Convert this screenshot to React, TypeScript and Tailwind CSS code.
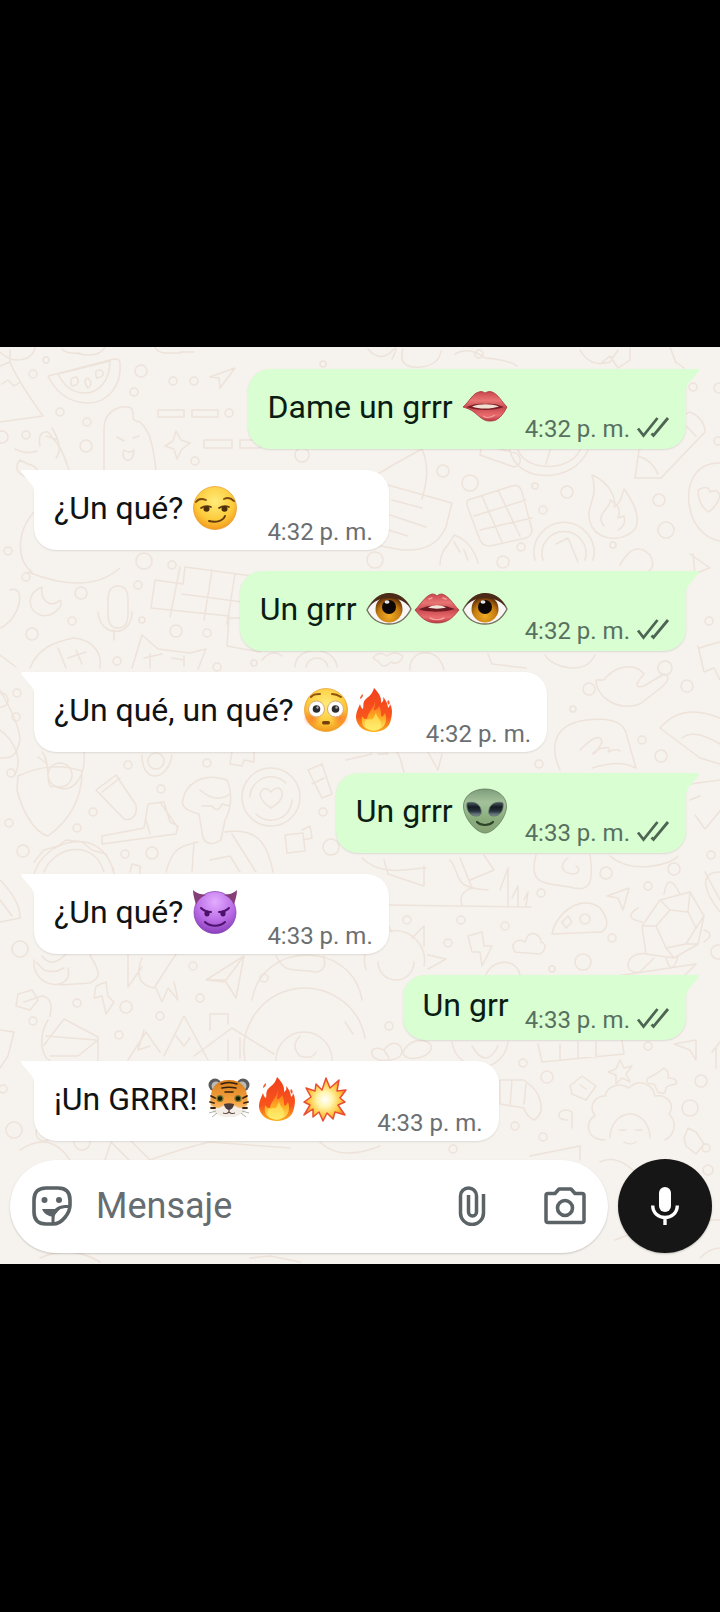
import type { ReactNode } from "react";

type EmojiName = "kiss" | "smirk" | "eye" | "lips" | "flushed" | "fire" | "alien" | "devil" | "tiger" | "boom";

type Message = {
  out: boolean;
  text: string;
  emojis: EmojiName[];
  time: string;
};

const messages: Message[] = [
  { out: true, text: "Dame un grrr", emojis: ["kiss"], time: "4:32 p. m." },
  { out: false, text: "¿Un qué?", emojis: ["smirk"], time: "4:32 p. m." },
  { out: true, text: "Un grrr", emojis: ["eye", "lips", "eye"], time: "4:32 p. m." },
  { out: false, text: "¿Un qué, un qué?", emojis: ["flushed", "fire"], time: "4:32 p. m." },
  { out: true, text: "Un grrr", emojis: ["alien"], time: "4:33 p. m." },
  { out: false, text: "¿Un qué?", emojis: ["devil"], time: "4:33 p. m." },
  { out: true, text: "Un grr", emojis: [], time: "4:33 p. m." },
  { out: false, text: "¡Un GRRR!", emojis: ["tiger", "fire", "boom"], time: "4:33 p. m." },
];

const emojiLabels: Record<EmojiName, string> = {
  kiss: "🫦",
  smirk: "😏",
  eye: "👁️",
  lips: "👄",
  flushed: "😳",
  fire: "🔥",
  alien: "👽",
  devil: "😈",
  tiger: "🐯",
  boom: "💥",
};

function Gradients() {
  return (
    <svg className="absolute h-0 w-0" aria-hidden="true">
      <defs>
        <radialGradient id="yellow" cx="50%" cy="35%" r="65%">
          <stop offset="0" stopColor="#ffec7a" />
          <stop offset="0.65" stopColor="#fdcb3c" />
          <stop offset="1" stopColor="#f39a1d" />
        </radialGradient>
        <radialGradient id="blush" cx="50%" cy="50%" r="50%">
          <stop offset="0" stopColor="#f9722b" stopOpacity="0.75" />
          <stop offset="1" stopColor="#f9722b" stopOpacity="0" />
        </radialGradient>
        <linearGradient id="lip" x1="0" y1="0" x2="0" y2="1">
          <stop offset="0" stopColor="#c9474d" />
          <stop offset="0.3" stopColor="#e87573" />
          <stop offset="0.55" stopColor="#c94850" />
          <stop offset="0.8" stopColor="#e86b6c" />
          <stop offset="1" stopColor="#b93843" />
        </linearGradient>
        <radialGradient id="iris" cx="50%" cy="75%" r="70%">
          <stop offset="0" stopColor="#f2ab24" />
          <stop offset="0.6" stopColor="#c47a10" />
          <stop offset="1" stopColor="#5a2b08" />
        </radialGradient>
        <linearGradient id="flame" x1="0" y1="0" x2="0" y2="1">
          <stop offset="0" stopColor="#f0401f" />
          <stop offset="0.65" stopColor="#f8551c" />
          <stop offset="1" stopColor="#fbb21b" />
        </linearGradient>
        <linearGradient id="flame-in" x1="0" y1="0" x2="0" y2="1">
          <stop offset="0" stopColor="#fb6a1c" />
          <stop offset="0.6" stopColor="#ffb824" />
          <stop offset="1" stopColor="#fff27a" />
        </linearGradient>
        <linearGradient id="alien-skin" x1="0" y1="0" x2="0" y2="1">
          <stop offset="0" stopColor="#7d9c79" />
          <stop offset="0.3" stopColor="#a3c29b" />
          <stop offset="0.7" stopColor="#8aac7c" />
          <stop offset="1" stopColor="#86a274" />
        </linearGradient>
        <linearGradient id="alien-eye" x1="0" y1="0" x2="0" y2="1">
          <stop offset="0" stopColor="#4a5863" />
          <stop offset="0.35" stopColor="#141b22" />
          <stop offset="0.65" stopColor="#28333d" />
          <stop offset="1" stopColor="#8797a3" />
        </linearGradient>
        <radialGradient id="purple" cx="50%" cy="25%" r="75%">
          <stop offset="0" stopColor="#e3acff" />
          <stop offset="0.6" stopColor="#ba6de6" />
          <stop offset="1" stopColor="#8b40bd" />
        </radialGradient>
        <linearGradient id="fur" x1="0" y1="0" x2="0" y2="1">
          <stop offset="0" stopColor="#d97d1d" />
          <stop offset="0.6" stopColor="#f6a542" />
          <stop offset="1" stopColor="#f7d9ae" />
        </linearGradient>
        <radialGradient id="blast" cx="50%" cy="50%" r="50%">
          <stop offset="0" stopColor="#ffffff" />
          <stop offset="0.35" stopColor="#fff6b0" />
          <stop offset="0.75" stopColor="#ffc942" />
          <stop offset="1" stopColor="#f88a2b" />
        </radialGradient>
      </defs>
    </svg>
  );
}

const emojiArt: Record<EmojiName, ReactNode> = {
  kiss: (
    <>
      <path d="M0 22C6 17 10 8 16 7c3-1 4 0 6 1 2-1 4-2 7-1 6 2 10 10 15 15-4 8-9 14-16 14-7 1-12-5-17-9-4-3-8-4-11-5Z" fill="url(#lip)" stroke="#a8343d" strokeWidth="0.8" />
      <path d="M3 22c8-3 12-4 19-3 7-1 12 0 19 3-5 2-12 3-18 3C15 25 9 24 3 22Z" fill="#7a1d25" />
      <path d="M9 21.500c7-3 20-3 27 0-7 2.500-20 3-27 0Z" fill="#f1dfd2" />
      <path d="M20 31c3 2 8 2 12-1" fill="none" stroke="#f49a96" strokeWidth="1.500" />
    </>
  ),
  smirk: (
    <>
      <circle cx="22" cy="22" r="21.500" fill="url(#yellow)" stroke="#e89a26" strokeWidth="0.700" />
      <path d="M3 16c2-3 5-4 10-2M31 13c4-2 7-1 10 2" fill="none" stroke="#7a4a10" strokeWidth="1.800" strokeLinecap="round" />
      <path d="M8 22c3-2 6-2.500 10-1M26 22c3-2 6-2.500 10-1" fill="none" stroke="#5c380c" strokeWidth="1.700" strokeLinecap="round" />
      <ellipse cx="13.500" cy="23" rx="3" ry="2.700" fill="#4c2e0a" />
      <ellipse cx="31.500" cy="23" rx="3" ry="2.700" fill="#4c2e0a" />
      <path d="M16 35c7 2 14 0 16-5" fill="none" stroke="#633b0c" strokeWidth="2" strokeLinecap="round" />
    </>
  ),
  eye: (
    <>
      <path d="M0 23C6 12 13 7 22 7s17 5 22 15c-5 10-13 15-22 15S5 33 0 23Z" fill="#f8f7f6" stroke="#77705f" strokeWidth="1.400" />
      <circle cx="22" cy="22" r="13.500" fill="url(#iris)" />
      <circle cx="22" cy="20" r="7" fill="#0d0705" />
      <path d="M1 21C7 11 14 6 22 6s16 4 21 14c-6-6-12-9-21-9S7 14 1 21Z" fill="#4b2a18" />
      <ellipse cx="20" cy="15" rx="2.500" ry="1.800" fill="#fff" opacity="0.9" />
    </>
  ),
  lips: (
    <>
      <path d="M0 23C6 17 10 9 17 7c3 0 4 1 5 2 1-1 2-2 5-2 7 2 11 10 17 16-5 6-10 13-22 13S5 29 0 23Z" fill="url(#lip)" stroke="#aa3941" strokeWidth="0.8" />
      <path d="M4 22c8-3 12-4 18-3 6-1 10 0 18 3-8 3-28 4-36 0Z" fill="#6d1b22" />
      <path d="M13 20.500c6-3 12-3 18 0-5 1.500-13 1.500-18 0Z" fill="#f3e4d8" />
      <path d="M15 31c4 2 10 2 14 0M14 12l3-1M28 11l3 1" fill="none" stroke="#f5a09c" strokeWidth="1.500" strokeLinecap="round" />
    </>
  ),
  flushed: (
    <>
      <circle cx="22" cy="22" r="21.500" fill="url(#yellow)" stroke="#e89a26" strokeWidth="0.700" />
      <circle cx="8" cy="30" r="9" fill="url(#blush)" />
      <circle cx="36" cy="30" r="9" fill="url(#blush)" />
      <path d="M7 9c3-3 5-3 9-3M28 6c4 0 6 1 9 3" fill="none" stroke="#8a5310" strokeWidth="2" strokeLinecap="round" />
      <circle cx="12.500" cy="21" r="8" fill="#fff" stroke="#d9a873" strokeWidth="1" />
      <circle cx="31.500" cy="21" r="8" fill="#fff" stroke="#d9a873" strokeWidth="1" />
      <circle cx="12.500" cy="21" r="3.800" fill="#2b2b30" />
      <circle cx="31.500" cy="21" r="3.800" fill="#2b2b30" />
      <circle cx="13.500" cy="19.500" r="1.200" fill="#aaa" />
      <circle cx="32.500" cy="19.500" r="1.200" fill="#aaa" />
      <rect x="18" y="33" width="8" height="3.500" rx="1.700" fill="#74400c" />
    </>
  ),
  fire: (
    <>
      <path d="M22 0c4 4 8 9 7 15 2-1 3-3 2-6 4 4 5 9 5 11 1-1 2-2 2-4 3 5 2 11 1 15-1 8-8 13-17 13S5 39 4 30c0-6 2-9 4-14 1 3 1 4 3 5 1-4-1-7 4-11 4-3 6-6 7-10Z" fill="url(#flame)" />
      <path d="M23 13c1 4-1 6-1 9 3 0 4-2 5-4 3 5 1 8 3 11 1-1 2-2 3-4 3 8 0 17-11 17S9 36 10 28c2 3 3 3 5 3 1-8 7-10 8-18Z" fill="url(#flame-in)" opacity="0.900" />
      <path d="M18 31c3 2 5-4 6-7 0 5 5 7 5 12s-3 7-7 7-9-2-9-7c0-2 0-3 1-5 1 1 2 1 4 0Z" fill="#fff06d" opacity="0.650" />
      <path d="M11 6c-2 1-3 3-3 5 2-1 3-2 3-5ZM36 12c2 1 2 3 1 5-2-2-2-3-1-5Z" fill="#f5572c" />
    </>
  ),
  alien: (
    <>
      <path d="M22 0c13 0 22 8 21.500 18C43 29 31 44 22 44S1 29 .5 18C0 8 9 0 22 0Z" fill="url(#alien-skin)" stroke="#647c5f" strokeWidth="0.8" />
      <path d="M4 14c5-2 13 0 14 7 1 5-2 6-5 6-6 0-10-6-9-13Z" fill="url(#alien-eye)" stroke="#56695a" strokeWidth="0.8" />
      <path d="M40 14c-5-2-13 0-14 7-1 5 2 6 5 6 6 0 10-6 9-13Z" fill="url(#alien-eye)" stroke="#56695a" strokeWidth="0.8" />
      <path d="M14 33c4 4 12 4 16 0" fill="none" stroke="#2d4328" strokeWidth="2.200" strokeLinecap="round" />
    </>
  ),
  devil: (
    <>
      <circle cx="22" cy="22.500" r="21" fill="url(#purple)" stroke="#8138ae" strokeWidth="0.700" />
      <path d="M0 0C4 4 8 4 13 5c-5 2-8 5-10 10C2 10 0 6 0 0ZM44 0c-4 4-8 4-13 5 5 2 8 5 10 10 1-5 3-9 3-15Z" fill="#853f78" />
      <path d="M8 18c3 3 6 4 10 4M36 18c-3 3-6 4-10 4" fill="none" stroke="#4e136c" strokeWidth="2" strokeLinecap="round" />
      <ellipse cx="14" cy="23.500" rx="2.600" ry="3" fill="#4b1168" />
      <ellipse cx="30" cy="23.500" rx="2.600" ry="3" fill="#4b1168" />
      <path d="M12 32c5 5 15 5 20 0" fill="none" stroke="#4e136c" strokeWidth="2" strokeLinecap="round" />
    </>
  ),
  tiger: (
    <>
      <circle cx="8" cy="8" r="6.500" fill="#5a5a5a" />
      <circle cx="36" cy="8" r="6.500" fill="#5a5a5a" />
      <circle cx="9" cy="9" r="4.500" fill="#b9bbb9" />
      <circle cx="35" cy="9" r="4.500" fill="#b9bbb9" />
      <path d="M22 3c12 0 17 7 18 15 2 10-1 17-6 19-4 2-8 3-12 3s-8-1-12-3C5 35 2 28 4 18 5 10 10 3 22 3Z" fill="url(#fur)" />
      <path d="M22 27c5 0 6 3 11 4 3 0 5-1 7-3-1 6-3 8-6 9-4 3-8 3-12 3s-8 0-12-3c-3-1-5-3-6-9 2 2 4 3 7 3 5-1 6-4 11-4Z" fill="#f2eee7" />
      <path d="M14 7c5-2 11-2 16 0M15 11c5-1 9-1 14 0M18 15h8" fill="none" stroke="#33200f" strokeWidth="1.500" strokeLinecap="round" />
      <path d="M4 19l4 2M3 25l4 1M4 31l4 0M40 19l-4 2M41 25l-4 1M40 31l-4 0" stroke="#3a2410" strokeWidth="1.800" strokeLinecap="round" />
      <circle cx="13" cy="21.500" r="3.600" fill="#7d7a34" />
      <circle cx="31" cy="21.500" r="3.600" fill="#7d7a34" />
      <circle cx="13" cy="21.500" r="2.300" fill="#17210b" />
      <circle cx="31" cy="21.500" r="2.300" fill="#17210b" />
      <path d="M17 27c3-1 7-1 10 0 0 3-3 6-5 6s-5-3-5-6Z" fill="#4b3c3a" />
      <path d="M22 32v3m-6 1c3 1 4 1 6-1 2 2 3 2 6 1" fill="none" stroke="#5a463f" strokeWidth="1.200" />
      <path d="M9 34l-7 2m8 0l-5 4M35 34l7 2m-8 0 5 4" stroke="#9b9b9b" strokeWidth="0.800" />
    </>
  ),
  boom: (
    <path
      d="m23 1 4 10 9-8-2 11 9-1-6 8 5 4-7 3 7 10-10-3-2 7-6-6-4 8-4-9-6 5 0-8-9 6 6-10-6-3 7-5-5-9 9 3 1-7 6 6Z"
      fill="url(#blast)"
      stroke="#e94e34"
      strokeWidth="1.500"
      strokeLinejoin="round"
    />
  ),
};

function Emoji({ name }: { name: EmojiName }) {
  return (
    <svg role="img" aria-label={emojiLabels[name]} viewBox="0 0 44 44" className="mx-[2px] h-11 w-11 shrink-0 overflow-visible">
      {emojiArt[name]}
    </svg>
  );
}

const dots: [number, number, number][] = [
  [46, 360, 3], [33, 374, 4], [141, 371, 6], [134, 392, 4], [173, 381, 4], [194, 381, 4], [60, 412, 4], [87, 422, 4],
  [26, 435, 4], [86, 446, 6], [2, 437, 6], [229, 413, 4], [195, 461, 4], [302, 455, 7], [8, 551, 4], [144, 561, 8],
  [172, 565, 4], [323, 364, 3], [443, 471, 6], [470, 483, 8], [535, 486, 3], [567, 492, 6], [543, 510, 4], [659, 500, 6],
  [666, 530, 8], [521, 547, 4], [503, 562, 6], [375, 560, 8], [613, 545, 3], [718, 441, 4], [719, 388, 5], [479, 354, 4],
  [693, 387, 4], [26, 577, 4], [81, 593, 6], [138, 585, 4], [72, 621, 4], [32, 634, 6], [142, 620, 3], [176, 631, 6],
  [207, 633, 4], [117, 661, 4], [217, 667, 4], [254, 663, 3], [17, 693, 4], [1, 700, 7], [16, 717, 4], [11, 773, 4],
  [128, 765, 4], [207, 763, 4], [161, 789, 4], [709, 621, 4], [665, 668, 7], [687, 686, 6], [589, 689, 6], [573, 709, 3],
  [642, 740, 4], [661, 756, 6], [539, 764, 4], [9, 823, 4], [23, 851, 6], [77, 828, 4], [93, 812, 4], [125, 854, 4],
  [152, 853, 6], [323, 812, 4], [331, 847, 8], [20, 949, 8], [111, 946, 4], [193, 966, 4], [264, 978, 4], [200, 998, 4],
  [77, 1003, 4], [606, 873, 6], [674, 869, 6], [541, 893, 4], [648, 886, 4], [407, 920, 4], [461, 920, 4], [505, 926, 4],
  [448, 943, 4], [612, 938, 4], [583, 962, 8], [552, 969, 3], [718, 952, 7], [711, 855, 4], [119, 1035, 4], [33, 1021, 4],
  [160, 1016, 4], [126, 1007, 6], [14, 1130, 8], [44, 1133, 8], [82, 1142, 8], [3, 1089, 4], [389, 1026, 4], [648, 1046, 4],
  [523, 1063, 4], [547, 1077, 6], [701, 1081, 6], [515, 1126, 4], [543, 1137, 4], [706, 1148, 4], [453, 1149, 4],
  [690, 1108, 8], [708, 1170, 5],
];

const doodles: string[] = [
  // fruit slice, tent, popsicle and sparkle
  "M48 376l66-17c3 0 6 0 6 4 2 22-12 41-34 40-20-1-32-14-38-27ZM58 374l52-13c0 18-10 32-25 32-14 0-22-9-27-19M72 386q-4-9 5-9 4 8-5 9M88 388q-6-8 0-10 6 6 0 10M97 378q-4-9 4-8 6 6-4 8",
  "M0 366l10-4c8 20 22 38 33 54L0 422M2 384l6-4 6 6 6-4M10 362V350M0 352c14 14 34 8 35-5",
  "M104 470v-40c0-26 28-26 28-20 4 4-4 10 8 12 8 8 12 14 16 48M117 437l7 4M133 438l6-2M124 450q6 4 10 0-1 12-8 10-5-4-2-10",
  "M176 431l5 9 9 3-8 6-5 10-3-10-9-3 8-5ZM210 377l25-9-15 20-1-10ZM158 410h26v7h-26ZM192 410h26v7h-26ZM204 440h28v8h-28ZM240 440h20v8h-20ZM155 347q2 6 12 6h14M180 352h14M62 349q4 5 18 4M105 347q-6 12-30 6",
  "M15 449q12 6 22 2M20 460q-8 10 4 16c14 4 20-8 4-12ZM52 428q12 20 4 30M46 436l12 4M40 446c-4-16 10-18 12-8 10 8 14 24 17 32",
  "M368 349q12 14 24 2 8-8 0 8M403 349q-6 20 18 18 18-2 20-16M455 354q14-8 30 4 24 2 32 8M580 350q10 18 30 12l8-12M600 364l10-8 8 12 12-8 0-12M670 347l6 16M676 362l8 6",
  // clock, chocolate, flame, pencil, smile
  "M510 450c6 34 64 34 78 0M518 450c8 22 52 22 62 0M550 450l-4 14M480 455l34 12c8-2 8-10 2-14l-34-8ZM362 485c10-8 30-20 60-36 8 18 4 36 0 50",
  "M468 500l44-14q8-2 10 6l10 38q0 6-6 8l-36 8q-8 0-10-6l-12-32q-2-6 0-8ZM482 496l20 46M498 490l22 46M474 516l52-16M480 530l52-12",
  "M592 475c20 8 24 26 22 32 8-4 8-14 10-18 10 14 16 26 12 38-8 14-34 16-44 0-10-20 8-26 0-52ZM604 526c-10-12 8-18 6-26 14 8 8 16 8 18l6-2c2 8-2 12-6 14",
  "M635 478l4-28 50-38c8 2 16 10 16 20l-44 46ZM638 456q14 4 20 18M680 420l16 16M720 463c-30 0-34 28-30 46 4 20 18 30 30 32M698 490q10-6 12 2 8-4 10 4-4 12-12 16-10-8-10-22",
  "M388 485l64 18-6 24c-8 18-22 24-44 23l-32-6M392 500l30 8M390 515l36 12M388 530l20 6",
  "M535 560a30 30 0 1 1 58 0M543 560a22 22 0 1 1 42 0M556 544l12-6 10 24M440 565c0-16 10-20 14-30 16 6 22 20 24 28M454 542l6 10M464 550l4 10M620 565q14-26 30-10 8 14-8 20M690 554l20 14M693 554l2 20 14-6",
  // calendar, moon, mic, cat and lozenge
  "M185 567l75 10v75l-33-6 2-30-78-8 4-28 28 4ZM182 594l60 8M212 570l-8 50M235 574l-8 50M180 567l-10 50M227 618h18M40 588c-20 10-6 34 12 26 14-8 8-18 6-12-10 6-18-4-16-15ZM108 600q0-14 10-14t10 14v14q0 14-10 14t-10-14ZM98 612c2 26 34 26 34 0M114 630v10",
  "M30 668c8-20 24-26 44-30 20 2 28 16 26 30M58 648l8 20M68 658l18-6M76 650l6 14M132 668l10-33 16 14 32 4 16-4-8 20M144 658l18-4M150 654v14M172 658l12 2M184 656v10M10 590c16-6 12 28-10 38M0 655l16 12M28 572q60 24 92-4M36 510c-20 20-20 50-4 62",
  "M0 690c8 14 20 36 20 50-4 20-12 18-20 18M295 667c0-22 40-22 42 0M306 667c2-12 20-12 22 0M262 660q10-12 20-4M700 648c8-4 14-4 20-6M698 646l6 26 10-4 6 12M604 680c10-14 30-18 40-6q-14 16 0 12l20-12q10 4-6 16l-18 14c-24 8-44-8-44-24Z",
  "M660 728q22-26 60-10M660 728l40 30 20 6M682 738q12-10 38 6M560 770c-12-26-4-46 26-50 36-4 40 8 42 20l8 28c-12-6-24-6-44 0M580 750q20-20 22-8c-10 20-14 10 0 6q10-2 6 4 8-4 12-1M545 655c6 12 40 22 50 0M488 654l4 10 34 4M373 658q6-8 14-2 8-6 16 0-4 10-12 6-8 8-12 0ZM410 670c-2-20 28-26 34 0",
  // pear, cup, hammer, barista, record
  "M42 752c10 10 2 40 12 34 20 10 32-10 30-34M48 775a12 12 0 1 0 24 0 12 12 0 1 0-24 0M38 757l8 6M142 755c0 30 26 26 30 0M148 761a8 8 0 1 0 16 0 8 8 0 1 0-16 0M232 752l-2 12 12 2 2-6 10 2v-10M0 730c14 10 24 30 14 46M17 790c4 16 15 42 31 46 22-16 34-38 34-65-24-8-44-4-64 5Z",
  "M96 790l20-15 20 30c2 12-6 16-12 14Z M102 792l18-14M102 836l42-8 4-24 16-2 6 20 8 4-2 8-74 10ZM146 820l4 14M160 802l18 26",
  "M183 800c2-16 20-28 44-20 6 14 4 30-2 40l-4 20q-12 8-18-2l-4-24c-14-4-18-8-16-14ZM200 790q16 14 30 4M202 806h10q6 8 10-2l8 2M166 872c6-22 12-26 32-30M225 832c30-4 42 8 48 40M194 842l-2 30M232 834l24 38M210 860l20-4 10 16",
  "M242 797a29 29 0 1 0 58 0 29 29 0 1 0-58 0M250 797a21 21 0 0 1 36-14M256 814a21 21 0 0 0 36-14M260 794q4-10 11-2 8-8 11 0 2 8-11 16-10-6-11-14M285 835l18-2 2 18-18 2ZM302 830l8-4 2 12-9 2M308 770l14-6 10 30-10 4ZM312 784l12-6",
  "M34 874c10-36 70-50 80 0M44 872c10-26 50-34 60 0M34 862l10-12 14-4 8-6 16 2 10 8 14 4 8 16M130 872l2-8 8 2v8M378 754h10M386 752q10-6 14 6l4 14M428 752l10 18M442 754l-4 16M346 760l26-6",
  // garden line, cap, turtle, heart, cloud
  "M388 905l143 2M362 858c20 20 50 10 64 10M384 860l4 14 36 12v-20M460 858l12 30q-14 4-10 18M470 880l24-10-10-15M500 890l8-22v38M512 898l6-12v20M450 860c12 14 0 28 38 30M524 900l4-8-2 14",
  "M536 855c-8 30 8 28 34 32 20 6 24-4 20-32M568 858c-8 6-8 14 4 16 8 0 8-6 4-8M610 856c20 18 60 10 68 0M607 896l22-8-6 22-5-12ZM720 872c-22 0-16 20 0 40M705 872l15 28",
  "M552 934c4-22 30-40 48-26 16 20-2 26 0 24ZM562 922l6-6 4 6-6 6ZM580 919a5 5 0 1 0 10 0 5 5 0 1 0-10 0M515 952c-6-10 4-14 10-10 4-14 16-8 16 0 8 2 2 12-2 12ZM468 936l14-4 2 14h8l-10 20-2-14h-8Z",
  "M642 926l18-26 30-8 14 24-6 28-24 14-28-4ZM656 926l14-16 18 2 8 16-10 16-20 4ZM642 926l14 0M660 900l10 10M690 892l-2 20M704 916l-8 12M698 944l-12 0M674 958l-8-10M664 894q4-24 16 0M642 922q-20-4-4-14M704 930q12 4 0 12M648 954c-24-4-26 22-8 18l14-14M666 958q6 20 12-2M720 780l-30 4M695 815l10 14 15-18M690 800l10-4",
  "M366 970a30 30 0 1 1 58-4M378 962a18 18 0 0 0 36 0M412 938l12-12v20M428 955l18 4-18 10M392 932l-8-14M590 980l106-16-20 20M486 975c6-16 30-18 34 0",
  // bottles, paper planes, sun, moon and shapes
  "M34 960c-2 30 40 32 34 8M36 962l8 8q10 4 20-2M42 956q10 14 26-4M90 955c12 20 10 22 0 28l-30 2M128 955v32l14-20M142 958q-10 26 12 30l22-34M156 988l6 14 6-14 10 12-4-18M206 980l38-24-8 42-10-16ZM206 980l20 0 18-24M96 986l10-4 2 14 6 6-8 12-4-18-8 2ZM18 994l14-4 6 10-8 10-14-4ZM276 956c10 18 14 12 40 16 12-2 8-12 8-16",
  "M252 1000c10-60 100-60 110 0M245 1060a60 60 0 0 1 120-22M276 1060a28 28 0 0 1 56 0M300 1036q-10 10 0 20 12 4 16-4M345 1022l8 12M0 880c10 10 20 24 20 38l-20 4M0 900l12 16",
  "M48 1020c-12 20-4 40 2 40M50 1016q4-18-8-20l-18 6M0 1030l14 2-6 24-8 12M44 1045l20-26 34 18v24M46 1036l50 4M50 1056h28l20-16M128 1060l18-28 14 20M144 1030l-6 20 12-4M164 1056l20-40 24 44M176 1036l8 10 6-8M194 1056l38-28 42 26M210 1030v-16h18v10M228 1040v20M240 1038v20",
  "M384 1050q10 16 0 0ZM384 1050c14-20 30 10 4 10-20 4-22-18-4-10M404 1050c14-20 40-4 20 6-14 6-24 0-20-6M452 1042c4 30 50 36 56 0M472 1046q14 24 26 0M538 1044l4 18 82-8-2-14M560 1044v16M578 1042v16M596 1042v16M674 1044l22-4v20l-6-10ZM712 1052l8-10M716 1068v-20",
  // stars, tag, croissant, lion
  "M620 1060l4 8 8-2-6 8 4 8-8-4-6 6v-9l-8-3 8-3ZM664 1068q6 4 4 10 10 0 8 6-10 2-10 4 0 8-8 4l-4-8q-10 0-6-6l8-4ZM570 1086l12-10 14 10-10 14-14-6ZM580 1085l6 4M560 1112q6-4 12 0v16M560 1112q-4 8 8 8M500 1080l24 0q14 10 16 20 4 14-6 20-8-4-10-12l-24-4ZM512 1080l-2 26M526 1084l-2 20M684 1138l4-10 8 4 8 12-8 10-10-8Z",
  "M605 1140c-20 0-20-20-10-24-8-12 2-20 10-20 2-10 14-14 24-8 10-10 24-4 26 8 14-2 20 10 14 18 10 10 4 22-4 26M610 1138a20 24 0 1 1 40 0M620 1130h6M636 1130h6M624 1142q6 4 12 0M530 1156l50-10v14M600 1162q20-10 44 20M20 1150q30-20 50 10M105 1160l6-18 20 20M130 1140l20 20q40-14 60-18l80 6M320 1142q20 20 60 4M615 1240q50-20 105-20M700 1258q10-10 20-10M40 1258q30-14 60 4M250 1258l20-2 30 6",
];

function Wallpaper() {
  return (
    <svg aria-hidden="true" viewBox="0 347 720 917" preserveAspectRatio="xMidYMin slice" className="absolute inset-0 h-full w-full">
      <g fill="none" stroke="#ede3da" strokeWidth="1.500" strokeLinecap="round" strokeLinejoin="round">
        {dots.map(([x, y, r], i) => (
          <circle key={i} cx={x} cy={y} r={r} />
        ))}
        {doodles.map((d, i) => (
          <path key={i} d={d} />
        ))}
      </g>
    </svg>
  );
}

function Tail({ out }: { out: boolean }) {
  return out ? (
    <svg aria-hidden="true" viewBox="0 0 16 22" className="absolute top-0 -right-[14px] h-[22px] w-4 fill-[#d8fed2]">
      <path d="M0 0H14Q16 1 14 3L4 15Q2 18 2 22H0Z" />
    </svg>
  ) : (
    <svg aria-hidden="true" viewBox="0 0 16 22" className="absolute top-0 -left-[14px] h-[22px] w-4 fill-white">
      <path d="M16 0H2Q0 1 2 3L12 15Q14 18 14 22H16Z" />
    </svg>
  );
}

function DoubleCheck() {
  return (
    <svg role="img" aria-label="Entregado" viewBox="0 0 34 22" className="h-[22px] w-[34px] shrink-0">
      <path d="M2 12.500 7.500 19.500 21.500 2M15.500 17.500 17.500 19.500 32 2" fill="none" stroke="#4f6553" strokeWidth="2.800" />
    </svg>
  );
}

function Bubble({ message }: { message: Message }) {
  const { out, text, emojis, time } = message;
  return (
    <li
      className={
        out
          ? "relative flex items-end self-end rounded-[22px] rounded-tr-none bg-[#d8fed2] pt-[14px] pr-4 pl-5 text-[#0b1d12] shadow-[0_1px_2px_rgba(0,0,0,0.1)]"
          : "relative flex items-end self-start rounded-[22px] rounded-tl-none bg-white pt-[14px] pr-4 pl-5 text-[#101314] shadow-[0_1px_2px_rgba(0,0,0,0.1)]"
      }
    >
      <Tail out={out} />
      <p className="flex items-center pb-[18px] text-[32px] leading-[33px]">
        <span className="whitespace-pre">{emojis.length > 0 ? text + " " : text}</span>
        {emojis.length > 0 && (
          <span className="flex py-[2px]">
            {emojis.map((name, i) => (
              <Emoji key={i} name={name} />
            ))}
          </span>
        )}
      </p>
      {out ? (
        <span className="ml-4 flex items-start gap-[6px] pb-[7px] text-[24px] leading-[26px] text-[#587060]">
          <time>{time}</time>
          <DoubleCheck />
        </span>
      ) : (
        <time className="ml-7 pb-[5px] text-[24px] leading-[26px] text-[#6b6f72]">{time}</time>
      )}
    </li>
  );
}

function StickerIcon() {
  return (
    <svg aria-hidden="true" viewBox="0 0 40 40" className="h-10 w-10">
      <path d="M14 2H26Q38 2 38 14V19C38 27 30 38 21 38H14Q2 38 2 26V14Q2 2 14 2Z" fill="none" stroke="#5b6366" strokeWidth="3.600" strokeLinejoin="round" />
      <path d="M38 20.500H33Q21 21.500 21 33V38" fill="none" stroke="#5b6366" strokeWidth="3" strokeLinejoin="round" />
      <circle cx="12.500" cy="14" r="3" fill="#5b6366" />
      <circle cx="27" cy="14" r="3" fill="#5b6366" />
      <path d="M10 23H28L21 31C16 30 12 28 10 23Z" fill="#5b6366" />
    </svg>
  );
}

function ClipIcon() {
  return (
    <svg aria-hidden="true" viewBox="0 0 28 40" className="h-10 w-7">
      <path
        d="M25.500 8V27A11.500 11.500 0 0 1 2.500 27V10A8 8 0 0 1 18.500 10V26A4 4 0 0 1 10.500 26V9"
        fill="none"
        stroke="#5b6366"
        strokeWidth="3.500"
      />
    </svg>
  );
}

function CameraIcon() {
  return (
    <svg aria-hidden="true" viewBox="0 0 42 38" className="h-[38px] w-[42px]">
      <path d="M4 6.500H11L15 2H27L31 6.500H38Q40 6.500 40 8.500V33.500Q40 35.500 38 35.500H4Q2 35.500 2 33.500V8.500Q2 6.500 4 6.500Z" fill="none" stroke="#5b6366" strokeWidth="3.500" strokeLinejoin="round" />
      <circle cx="21" cy="21" r="7.500" fill="none" stroke="#5b6366" strokeWidth="3.600" />
    </svg>
  );
}

function MicIcon() {
  return (
    <svg aria-hidden="true" viewBox="0 0 28 40" className="h-10 w-7">
      <rect x="8" y="1" width="12" height="25" rx="6" fill="#fff" />
      <path d="M1.700 19.500C2 35.500 26 35.500 26.300 19.500M14 31V39" fill="none" stroke="#fff" strokeWidth="3.400" />
    </svg>
  );
}

export default function App() {
  return (
    <div className="min-h-screen bg-black pt-[347px] font-['Roboto','Noto_Sans',sans-serif]">
      <Gradients />
      <main className="relative overflow-hidden bg-[#f6f2ed]">
        <Wallpaper />
        <div className="relative">
          <ul className="flex flex-col gap-[21px] pt-[22px] pr-[34px] pl-[34px]">
            {messages.map((message, i) => (
              <Bubble key={i} message={message} />
            ))}
          </ul>
          <form className="flex items-center gap-[10px] pt-[18px] pr-2 pb-[11px] pl-[10px]" onSubmit={(e) => e.preventDefault()}>
            <div className="flex h-[93px] min-w-0 flex-1 items-center rounded-full bg-white pr-[22px] pl-[22px] shadow-[0_1px_2px_rgba(0,0,0,0.18)]">
              <button type="button" aria-label="Emojis y stickers" className="shrink-0">
                <StickerIcon />
              </button>
              <input
                type="text"
                aria-label="Mensaje"
                placeholder="Mensaje"
                className="ml-6 h-14 min-w-0 flex-1 bg-transparent text-[36px] text-[#101314] outline-none placeholder:text-[#666c6f]"
              />
              <button type="button" aria-label="Adjuntar" className="shrink-0">
                <ClipIcon />
              </button>
              <button type="button" aria-label="Cámara" className="ml-[58px] shrink-0">
                <CameraIcon />
              </button>
            </div>
            <button
              type="button"
              aria-label="Grabar mensaje de voz"
              className="flex h-[94px] w-[94px] shrink-0 items-center justify-center rounded-full bg-[#161616] shadow-[0_1px_2px_rgba(0,0,0,0.2)]"
            >
              <MicIcon />
            </button>
          </form>
        </div>
      </main>
    </div>
  );
}
